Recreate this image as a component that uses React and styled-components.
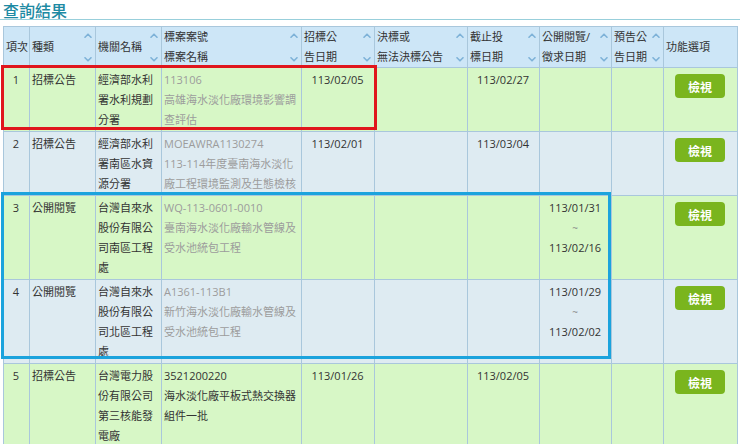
import React from "react";
import styled, { createGlobalStyle } from "styled-components";

const GlobalStyle = createGlobalStyle`
  html, body {
    margin: 0;
    padding: 0;
    background: #ffffff;
  }
  body {
    font-family: "Open Sans", "Noto Sans CJK TC", sans-serif;
    color: #333333;
  }
`;

const Page = styled.div`
  width: 740px;
  height: 444px;
  overflow: hidden;
`;

const TitleBar = styled.div`
  display: flex;
  align-items: center;
  height: 19px;
  margin-bottom: 6px;
  padding: 0 3px;
  border-bottom: 1px solid #98cfdb;
`;

const Title = styled.h2`
  margin: 0;
  line-height: 24px;
  font-size: 16px;
  font-weight: 500;
  font-family: "Noto Sans CJK TC", sans-serif;
  color: #1d8aa3;
`;

const TableWrap = styled.div`
  position: relative;
  margin-left: 3px;
`;

const Table = styled.table`
  border-collapse: collapse;
  table-layout: fixed;
  width: 734px;
  font-size: 11px;
`;

const Th = styled.th`
  background: #cde6f7;
  border: 1px solid #a9c7dc;
  padding: 0 3px 0 2px;
  height: 39px;
  text-align: left;
  font-weight: normal;
  vertical-align: middle;
  line-height: 20px;
  color: #333333;
`;

const HeadInner = styled.div`
  display: flex;
  justify-content: space-between;
  align-items: stretch;
  height: 40px;
`;

const HeadText = styled.div`
  display: flex;
  flex-direction: column;
  justify-content: center;
  white-space: nowrap;
`;

const Arrows = styled.div`
  display: flex;
  flex-direction: column;
  justify-content: space-between;
  padding: 6px 0 5px;
`;

const Row = styled.tr`
  background: ${(p) => (p.$tone === "green" ? "#d7f7c6" : "#deebf2")};
`;

const Td = styled.td`
  border: 1px solid #a9c7dc;
  padding: 2px 3px 1px 2px;
  vertical-align: top;
  line-height: 20px;
  text-align: ${(p) => (p.$center ? "center" : "left")};
  color: ${(p) => (p.$muted ? "#9c9c9c" : "#333333")};
  word-break: break-all;
`;

const Tilde = styled.div`
  color: #888888;
  font-size: 10px;
`;

const ViewButton = styled.button`
  display: block;
  margin: 4px auto 0;
  width: 50px;
  height: 24px;
  border: none;
  border-radius: 4px;
  background: #7ab51e;
  color: #ffffff;
  font-family: "Noto Sans CJK TC", sans-serif;
  font-size: 12px;
  font-weight: bold;
  cursor: pointer;
`;

const Mark = styled.div`
  position: absolute;
  box-sizing: border-box;
  border: 3px solid ${(p) => p.$color};
  pointer-events: none;
`;

function Chevron({ up }) {
  return (
    <svg width="8" height="5" viewBox="0 0 8 5">
      <path
        d={up ? "M1 4.2 L4 1.2 L7 4.2" : "M1 0.8 L4 3.8 L7 0.8"}
        fill="none"
        stroke="#7eb2d8"
        strokeWidth="1.6"
        strokeLinecap="round"
        strokeLinejoin="round"
      />
    </svg>
  );
}

const columns = [
  { w: 26, lines: ["項次"] },
  { w: 66, lines: ["種類"], sort: true },
  { w: 66, lines: ["機關名稱"], sort: true },
  { w: 140, lines: ["標案案號", "標案名稱"], sort: true },
  { w: 73, lines: ["招標公", "告日期"], sort: true },
  { w: 93, lines: ["決標或", "無法決標公告"], sort: true },
  { w: 72, lines: ["截止投", "標日期"], sort: true },
  { w: 72, lines: ["公開閱覽/", "徵求日期"], sort: true },
  { w: 52, lines: ["預告公", "告日期"], sort: true },
  { w: 74, lines: ["功能選項"] },
];

const rows = [
  {
    no: 1,
    tone: "green",
    type: "招標公告",
    org: "經濟部水利署水利規劃分署",
    code: "113106",
    name: "高雄海水淡化廠環境影響調查評估",
    muted: true,
    pub: "113/02/05",
    deadline: "113/02/27",
  },
  {
    no: 2,
    tone: "blue",
    type: "招標公告",
    org: "經濟部水利署南區水資源分署",
    code: "MOEAWRA1130274",
    name: "113-114年度臺南海水淡化廠工程環境監測及生態檢核",
    muted: true,
    pub: "113/02/01",
    deadline: "113/03/04",
  },
  {
    no: 3,
    tone: "green",
    type: "公開閱覽",
    org: "台灣自來水股份有限公司南區工程處",
    code: "WQ-113-0601-0010",
    name: "臺南海水淡化廠輸水管線及受水池統包工程",
    muted: true,
    review: ["113/01/31", "113/02/16"],
  },
  {
    no: 4,
    tone: "blue",
    type: "公開閱覽",
    org: "台灣自來水股份有限公司北區工程處",
    code: "A1361-113B1",
    name: "新竹海水淡化廠輸水管線及受水池統包工程",
    muted: true,
    review: ["113/01/29", "113/02/02"],
  },
  {
    no: 5,
    tone: "green",
    type: "招標公告",
    org: "台灣電力股份有限公司第三核能發電廠",
    code: "3521200220",
    name: "海水淡化廠平板式熱交換器組件一批",
    muted: false,
    pub: "113/01/26",
    deadline: "113/02/05",
  },
];

export default function App() {
  return (
    <Page>
      <GlobalStyle />
      <TitleBar>
        <Title>查詢結果</Title>
      </TitleBar>
      <TableWrap>
        <Table>
          <colgroup>
            {columns.map((c, i) => (
              <col key={i} style={{ width: c.w }} />
            ))}
          </colgroup>
          <thead>
            <tr>
              {columns.map((c, i) => (
                <Th key={i}>
                  <HeadInner>
                    <HeadText>
                      {c.lines.map((l) => (
                        <span key={l}>{l}</span>
                      ))}
                    </HeadText>
                    {c.sort && (
                      <Arrows>
                        <Chevron up />
                        <Chevron />
                      </Arrows>
                    )}
                  </HeadInner>
                </Th>
              ))}
            </tr>
          </thead>
          <tbody>
            {rows.map((r) => (
              <Row key={r.no} $tone={r.tone}>
                <Td $center>{r.no}</Td>
                <Td>{r.type}</Td>
                <Td>{r.org}</Td>
                <Td $muted={r.muted}>
                  <div>{r.code}</div>
                  <div>{r.name}</div>
                </Td>
                <Td $center>{r.pub}</Td>
                <Td $center></Td>
                <Td $center>{r.deadline}</Td>
                <Td $center>
                  {r.review && (
                    <>
                      <div>{r.review[0]}</div>
                      <Tilde>~</Tilde>
                      <div>{r.review[1]}</div>
                    </>
                  )}
                </Td>
                <Td></Td>
                <Td>
                  <ViewButton>檢視</ViewButton>
                </Td>
              </Row>
            ))}
          </tbody>
        </Table>
        <Mark $color="#e0161d" style={{ left: -2, top: 39, width: 376, height: 65 }} />
        <Mark $color="#1ba3dd" style={{ left: -2, top: 166, width: 610, height: 167 }} />
      </TableWrap>
    </Page>
  );
}
